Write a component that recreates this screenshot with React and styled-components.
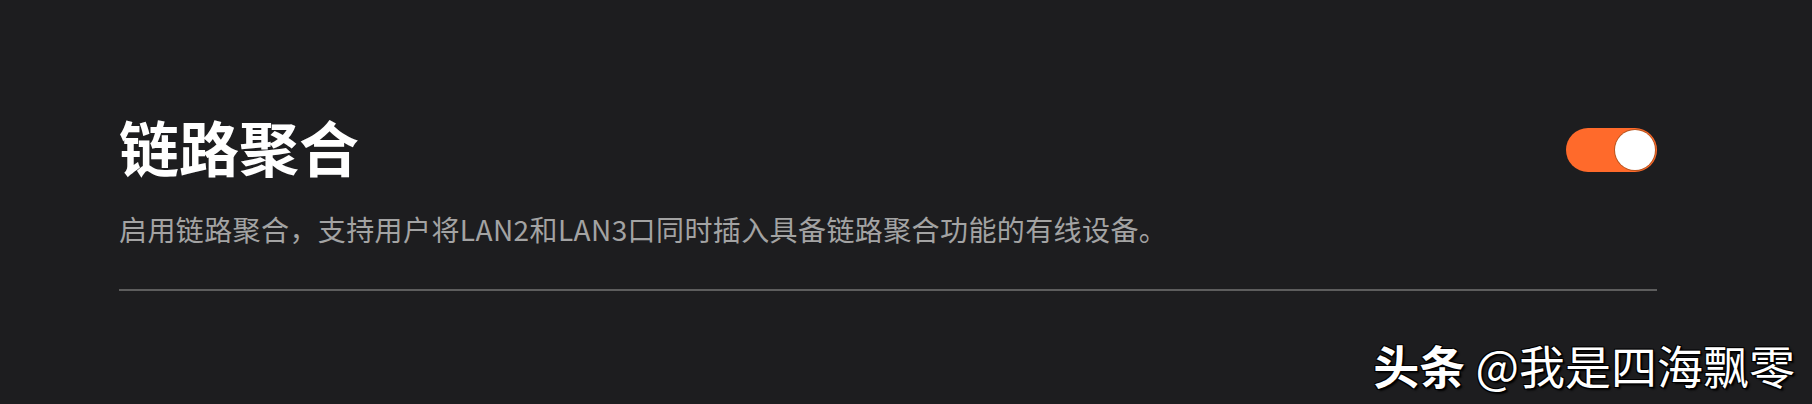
import React, { useState } from 'react';
import styled, { createGlobalStyle } from 'styled-components';

const GlobalStyle = createGlobalStyle`
  html, body {
    margin: 0;
    padding: 0;
    background: #1d1d1f;
    font-family: "Noto Sans CJK SC", "Noto Sans", sans-serif;
  }
`

const Page = styled.div`
  position: relative;
  height: 404px;
  padding: 0 155px 0 119px;
  box-sizing: border-box;
  overflow: hidden;
`

const Section = styled.div`
  padding-top: 103px;
  display: flex;
  flex-direction: column;
`

const HeaderRow = styled.div`
  display: flex;
  align-items: center;
  justify-content: space-between;
`

const Title = styled.h1`
  margin: 0;
  font-size: 60px;
  line-height: 86px;
  font-weight: 700;
  color: #ffffff;
`

const Description = styled.p`
  margin: 21px 0 0;
  font-size: 28px;
  line-height: 38px;
  letter-spacing: 0.4px;
  color: #a3a3a3;
`

const Divider = styled.div`
  margin-top: 41px;
  height: 2px;
  background: #5d5d5d;
`

const Switch = styled.button`
  width: 91px;
  height: 44px;
  border-radius: 22px;
  border: none;
  padding: 2px;
  margin-top: 8px;
  background: ${p => (p.on ? '#ff6a2b' : '#4a4a4a')};
  display: flex;
  justify-content: ${p => (p.on ? 'flex-end' : 'flex-start')};
  align-items: center;
  cursor: pointer;
  box-sizing: border-box;
`

const Knob = styled.span`
  width: 40px;
  height: 40px;
  border-radius: 50%;
  background: #ffffff;
  box-shadow: 0 0 0 1px #b8551f;
`

const Watermark = styled.div`
  position: absolute;
  right: 17px;
  bottom: 12px;
  font-size: 46px;
  line-height: 56px;
  color: #ffffff;
  white-space: nowrap;
  text-shadow: 1px 1px 0 #000, -1px -1px 0 #000, 1px -1px 0 #000, -1px 1px 0 #000, 2px 2px 2px #000;
`

const Bold = styled.span`
  font-weight: 700;
`

export default function App() {
  const [on, setOn] = useState(true);

  return (
    <>
      <GlobalStyle />
      <Page>
        <Section>
          <HeaderRow>
            <Title>链路聚合</Title>
            <Switch on={on} onClick={() => setOn(!on)}>
              <Knob />
            </Switch>
          </HeaderRow>
          <Description>
            启用链路聚合，支持用户将LAN2和LAN3口同时插入具备链路聚合功能的有线设备。
          </Description>
          <Divider />
        </Section>
        <Watermark>
          <Bold>头条</Bold> @我是四海飘零
        </Watermark>
      </Page>
    </>
  )
}
